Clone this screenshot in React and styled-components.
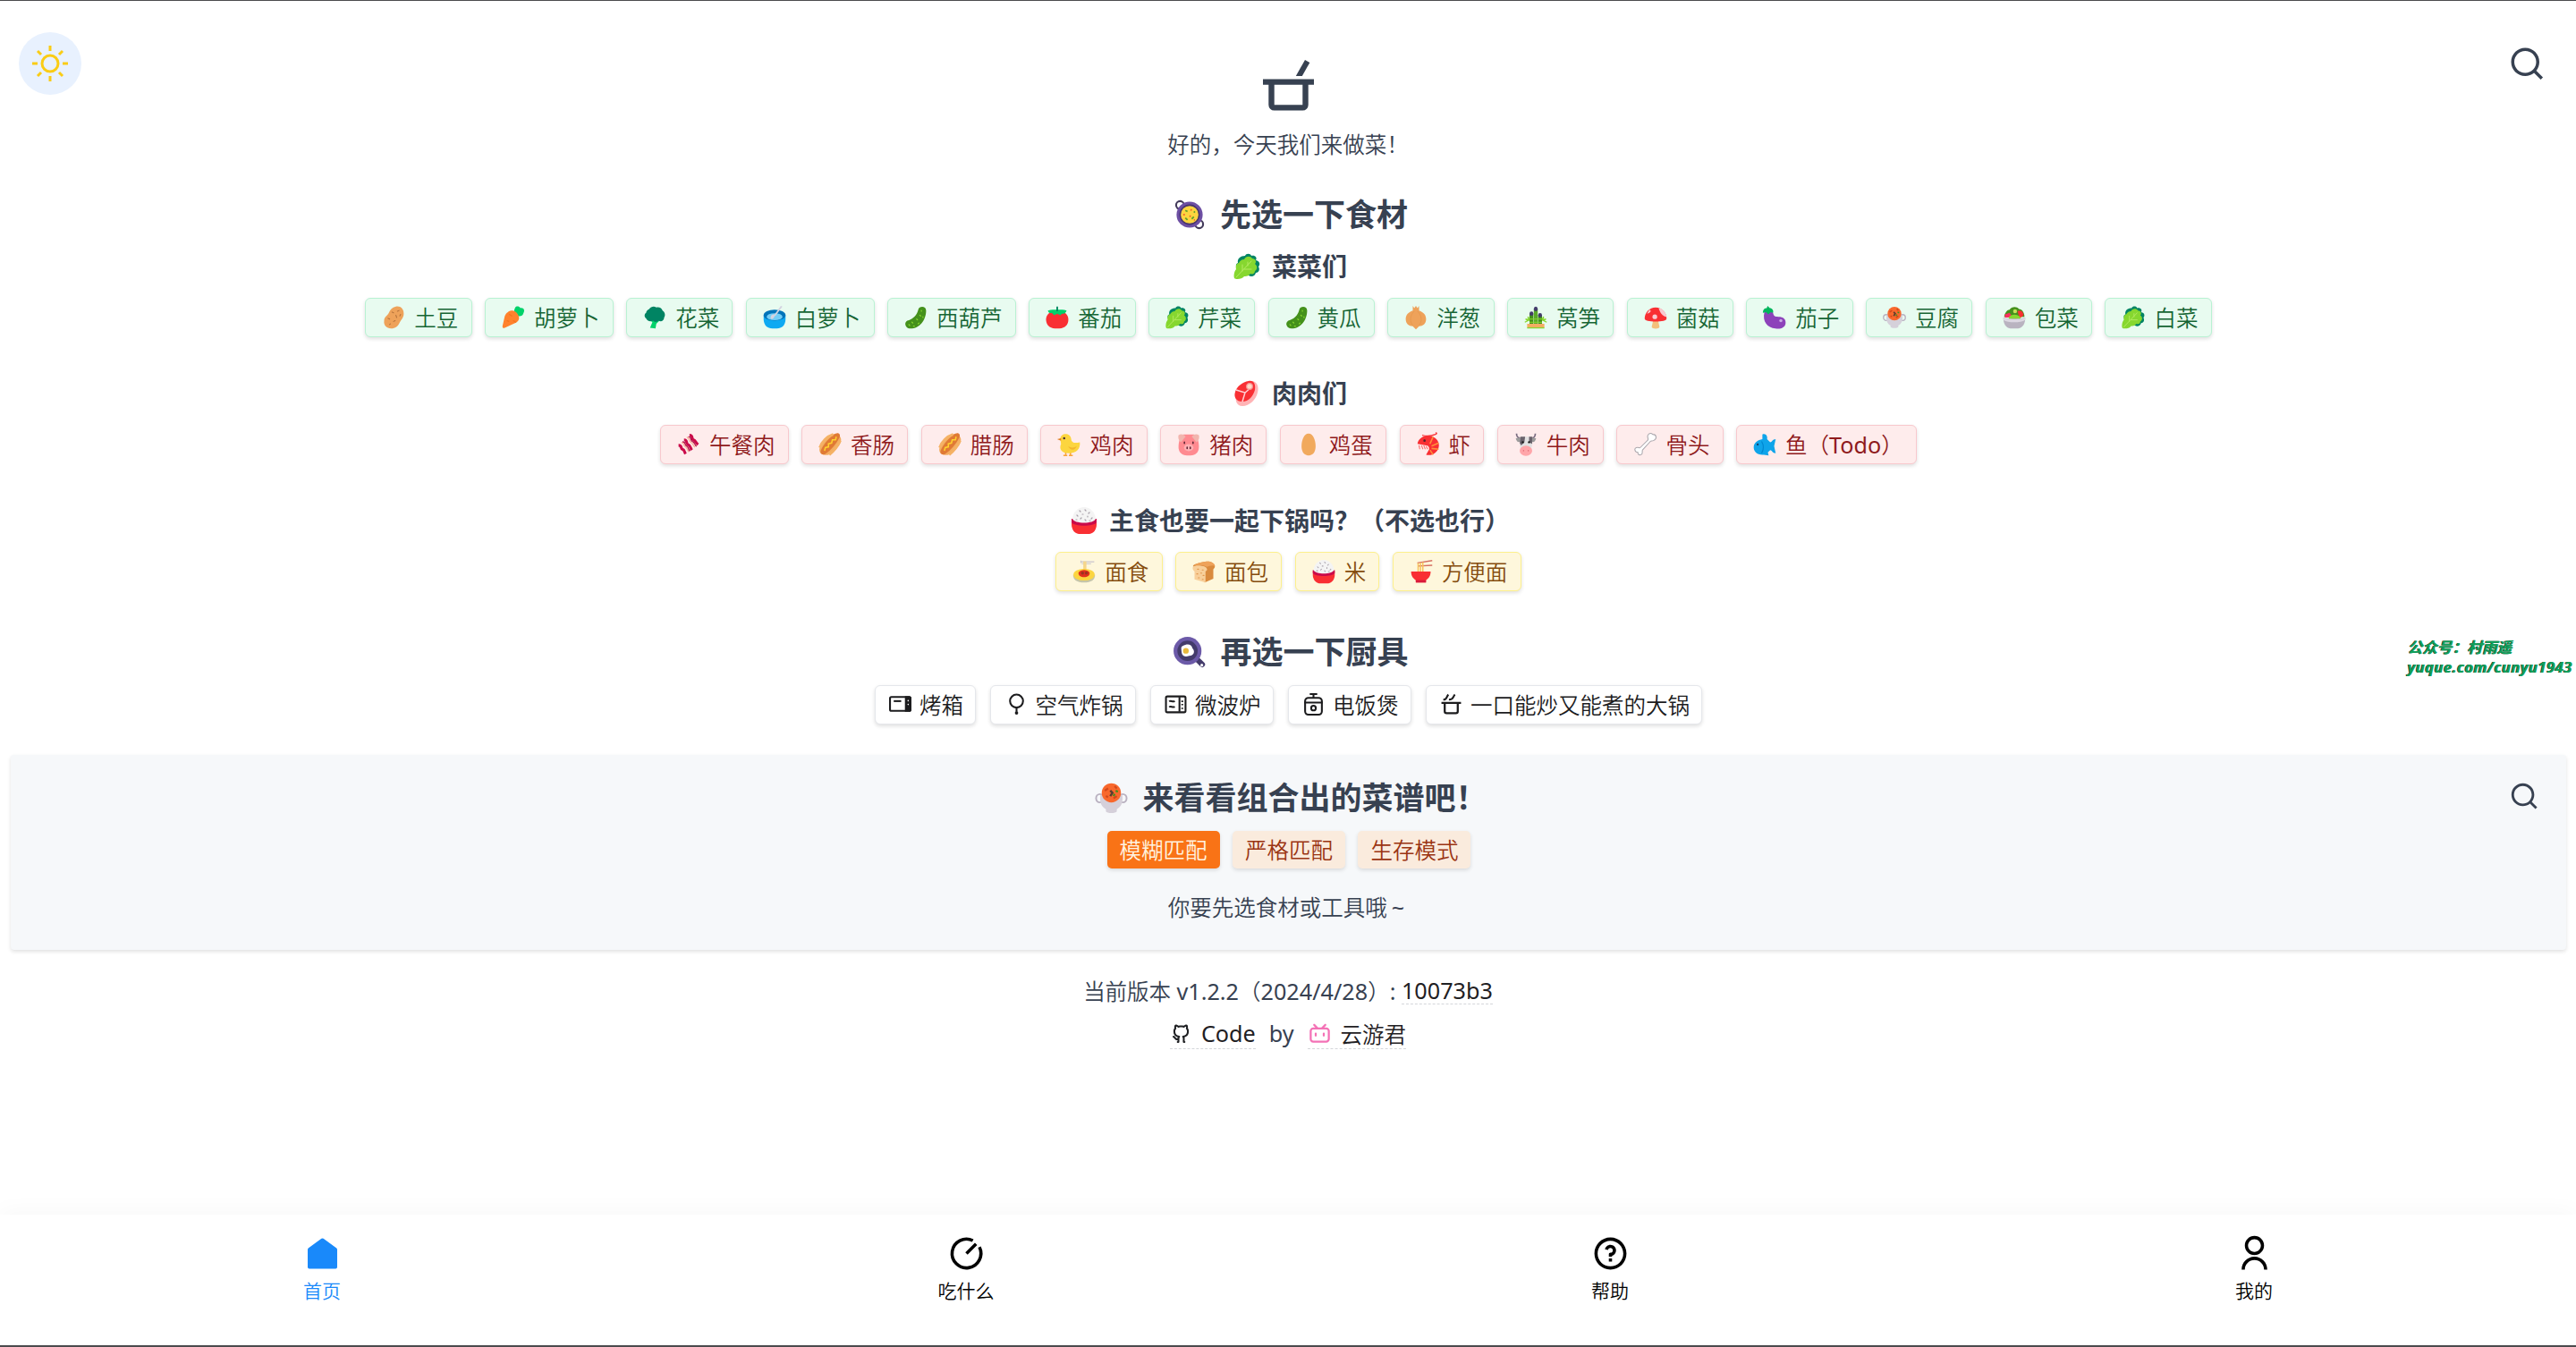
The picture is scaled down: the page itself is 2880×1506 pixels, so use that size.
import React from "react";
import styled, { createGlobalStyle } from "styled-components";
import {
  RiGithubLine,
  RiBilibiliLine,
  RiSearchLine,
  RiQuestionLine,
  RiUserLine,
} from "react-icons/ri";

const GlobalStyle = createGlobalStyle`
  * { box-sizing: border-box; }
  body {
    margin: 0;
    background: #fff;
    color: #374151;
    font-family: "Noto Sans", "Noto Sans CJK SC", sans-serif;
    font-size: 24.5px;
    font-weight: 350;
    text-spacing-trim: space-all;
  }
`;

const Page = styled.div`
  height: 1506px;
  display: flex;
  flex-direction: column;
  border-top: 1px solid #4b4b4d;
  border-bottom: 2px solid #4b4b4d;
  position: relative;
  overflow: hidden;
`;

const Latin = styled.span`
  font-size: 25.2px;
  font-weight: 400;
`;

const Header = styled.header`
  display: grid;
  grid-template-columns: 1fr auto 1fr;
  height: 141px;
  padding: 35px 34px 0 21px;
`;

const ThemeButton = styled.button`
  width: 70px;
  height: 70px;
  padding: 0;
  border: 0;
  border-radius: 50%;
  background: #e8f1fe;
  display: flex;
  align-items: center;
  justify-content: center;
`;

const Logo = styled.div`
  padding-top: 31px;
  margin-left: 13px;
  svg { display: block; width: 57px; height: 57px; }
`;

const IconButton = styled.button`
  justify-self: end;
  align-self: start;
  width: ${(p) => p.$size}px;
  height: ${(p) => p.$size}px;
  margin-top: ${(p) => p.$top || 0}px;
  padding: 0;
  border: 0;
  background: none;
  color: #374151;
  svg { display: block; width: 100%; height: 100%; }
`;

const Tagline = styled.p`
  margin: 0;
  height: 40px;
  line-height: 40px;
  text-align: center;
`;

const Heading = styled.h2`
  margin: ${(p) => p.$top}px 0 0 5px;
  height: 48px;
  line-height: 48px;
  font-size: 35px;
  font-weight: 700;
  display: flex;
  align-items: center;
  justify-content: center;
  gap: 15px;
`;

const SubHeading = styled.h3`
  margin: ${(p) => p.$top}px 0 0 4px;
  height: 36px;
  line-height: 36px;
  font-size: 28px;
  font-weight: 700;
  display: flex;
  align-items: center;
  justify-content: center;
  gap: 12px;
`;

const Row = styled.div`
  display: flex;
  justify-content: center;
  gap: ${(p) => p.$gap || 14.4}px;
  margin-top: ${(p) => p.$top}px;
  padding-left: 1px;
`;

const tones = {
  green: ["#e8fbf0", "#b9f2d3", "#166534"],
  red: ["#feecec", "#f8c8cd", "#8f1a1c"],
  yellow: ["#fef7dc", "#fdf08c", "#854d0e"],
  white: ["#fff", "#e5e7eb", "#1c1c1e"],
};

const Chip = styled.button`
  height: 44px;
  padding: 0 14.3px 1px 17px;
  display: flex;
  align-items: center;
  gap: 9px;
  border: 1px solid ${(p) => tones[p.$tone][1]};
  border-radius: 6px;
  background: ${(p) => tones[p.$tone][0]};
  color: ${(p) => tones[p.$tone][2]};
  box-shadow: 0 2px 4px rgba(0, 0, 0, 0.13);
  font: inherit;
  white-space: nowrap;
`;

const ToolChip = styled(Chip)`
  padding: 0 13.4px 1px 15.5px;
  gap: 9px;
`;

const Emoji = styled.svg`
  flex: none;
  width: ${(p) => p.$size}px;
  height: ${(p) => p.$size}px;
`;

const Panel = styled.section`
  position: relative;
  margin: 34px 11px 0 12px;
  height: 218px;
  border-radius: 4px;
  background: #f6f8fa;
  box-shadow: 0 2px 4px rgba(0, 0, 0, 0.12);
  padding-top: 24px;
`;

const PanelSearch = styled(IconButton)`
  position: absolute;
  top: 29px;
  right: 30px;
`;

const Mode = styled.button`
  height: 42px;
  padding: 0 14px 1px;
  border: 0;
  border-radius: 5px;
  font: inherit;
  color: ${(p) => (p.$active ? "#fff3e0" : "#9a3412")};
  background: ${(p) => (p.$active ? "#f97316" : "#faebdd")};
  box-shadow: 0 2px 4px rgba(0, 0, 0, 0.12);
`;

const Hint = styled(Tagline)`
  margin-top: 23px;
`;

const Tilde = styled(Latin)`
  display: inline-block;
  width: 24.5px;
`;

const Footer = styled.footer`
  margin-top: 21px;
  display: flex;
  flex-direction: column;
  align-items: center;
`;

const FooterLine = styled.div`
  height: 48px;
  display: flex;
  align-items: center;
  gap: ${(p) => p.$gap || 0}px;
  white-space: pre;
`;

const FooterLink = styled.a`
  height: ${(p) => p.$height || 34}px;
  margin-top: 1px;
  display: flex;
  align-items: center;
  gap: 10px;
  color: #1f2023;
  border-bottom: 1px dashed #d4d6da;
`;

const Nav = styled.nav`
  margin-top: auto;
  height: 146px;
  display: grid;
  grid-template-columns: repeat(4, 1fr);
  background: #fff;
  box-shadow: 0 -4px 24px rgba(0, 0, 0, 0.03);
`;

const NavItem = styled.a`
  display: flex;
  flex-direction: column;
  align-items: center;
  padding-top: 22px;
  font-size: 21px;
  line-height: 30px;
  gap: 12px;
  color: ${(p) => (p.$active ? "#1989fa" : "#000")};
  svg { width: 43px; height: 43px; display: block; }
  svg + span { margin-top: -7px; }
`;

const Watermark = styled.div`
  position: absolute;
  left: 2692px;
  top: 712px;
  font-size: 16.7px;
  line-height: 22px;
  font-weight: 700;
  font-style: italic;
  color: #10a05a;
  text-shadow: -1px 0 0 #0b3b22;
  white-space: nowrap;
`;

const WatermarkUrl = styled.div`
  letter-spacing: 0.4px;
`;

const art = {
  potato: (
    <>
      <path d="M19 2c6-1 10 3 10 9 0 5-3 7-5 11-2 5-6 8-11 8C7 30 3 26 4 20c0-5 4-6 6-10 2-4 4-7 9-8Z" fill="#eea25a" />
      <path d="M14 9l2 1M21 8l2-1M19 13l1 3M9 17l2 1M16 21l2-1M11 25l1-1M24 14l1-2" stroke="#b3703a" strokeWidth="1.2" strokeLinecap="round" />
    </>
  ),
  carrot: (
    <>
      <path d="M18 4c1-3 5-3 7 0 4-1 6 3 4 6-1 4-4 5-8 4-4-2-5-6-3-10Z" fill="#00d26a" />
      <path d="M9 9c5-4 12-1 14 6 1 4-2 7-5 8L5 29c-2 1-3 0-3-2L5 14c1-2 2-4 4-5Z" fill="#ff822d" />
      <path d="M11 12l3 2M19 22l-3-2M8 20l2 1" stroke="#f2731f" strokeWidth="1.3" strokeLinecap="round" />
    </>
  ),
  broccoli: (
    <>
      <path d="M11 17l7 2 7-2-7 7-1 6-7-1 3-7-5-4Z" fill="#00d26a" />
      <path d="M9 5c2-3 6-4 9-2 4-1 7 1 8 4 3 2 4 6 2 9 0 4-4 6-7 4-3 3-6 1-7 0-4 2-8 0-9-3-3-2-2-6 0-7 0-2 2-4 4-5Z" fill="#008463" />
    </>
  ),
  bowl: (
    <>
      <path d="M2 13h28v5c0 8-5 12-11 12h-6C7 30 2 26 2 18Z" fill="#0fa9f2" />
      <ellipse cx="16" cy="13" rx="14" ry="7" fill="#0074ba" />
      <ellipse cx="16" cy="15" rx="10" ry="4.500" fill="#73cdf6" />
      <path d="M16 14c-1 5-6 5-5 1 1-3 3-3 5-3L24 1l2 1-9 12Z" fill="#d3d3e0" />
    </>
  ),
  cucumber: (
    <>
      <path d="M19 6c1-5 10-5 10 1 0 12-8 23-20 23C3 30 0 23 5 20c7-2 12-6 14-14Z" fill="#44911b" />
      <path d="M23 7v1M21 13l1 1M25 15v1M17 18l1 1M19 24l1-1M11 22l1 1M7 25l1 1M13 27h1" stroke="#86d72f" strokeWidth="1.4" strokeLinecap="round" />
    </>
  ),
  tomato: (
    <>
      <path d="M8 9c6-2 10-2 16 0 5 2 7 7 6 12-1 6-6 9-14 9S3 27 2 21C1 16 3 11 8 9Z" fill="#f92f33" />
      <path d="M4 7c5-1 8-1 11-1V3h2v3c4 0 7 0 11 1-1 3-4 5-6 4l-2 2-4-2-4 2-3-3C7 11 5 10 4 7Z" fill="#00d26a" />
      <path d="M15 2h2v6h-2z" fill="#008463" />
    </>
  ),
  lettuce: (
    <>
      <path d="M14 4c1-3 6-3 7 0 4-1 7 2 5 5 5 1 5 5 3 7 2 4 0 7-3 7-1 4-5 5-8 3L7 20c-4-3-4-7-1-8-1-5 3-8 8-8Z" fill="#008463" />
      <path d="M13 8c2-4 7-4 9-1 4 0 5 4 3 6 4 3 2 7 0 8 0 3-3 4-5 3-2 3-6 3-7 3-2 3-9 4-11 2-1-3 0-8 2-10-1-4 1-7 3-7 1-2 3-4 6-4Z" fill="#86d72f" />
      <path d="M4 28 21 10M11 21v-7M13 19h8M17 15v-4" stroke="#b5ea62" strokeWidth="1" fill="none" strokeLinecap="round" />
    </>
  ),
  onion: (
    <>
      <path d="M12 1l2 3 2-3 2 3 2-3v6c6 2 9 6 9 11 0 6-4 9-9 9l-4 4-4-4c-5 0-9-3-9-9 0-5 3-9 9-11Z" fill="#eea25a" />
      <path d="M14 8c-6 5-6 14-2 18M18 8c6 5 6 14 2 18" stroke="#e5984d" strokeWidth="1" fill="none" />
    </>
  ),
  bamboo: (
    <>
      <path d="M2 22l4-2-3-2 4 1-1-4 3 6M30 22l-4-2 3-2-4 1 1-4-3 6" stroke="#86d72f" strokeWidth="1.500" fill="none" />
      <rect x="8" y="11" width="5" height="13" fill="#44911b" />
      <rect x="13.500" y="5" width="5" height="19" fill="#5aa82a" />
      <rect x="19" y="13" width="5" height="11" fill="#44911b" />
      <ellipse cx="10.500" cy="11" rx="2.500" ry="2.800" fill="#433b6b" />
      <ellipse cx="16" cy="5" rx="2.500" ry="3" fill="#433b6b" />
      <ellipse cx="21.500" cy="13" rx="2.500" ry="2.800" fill="#433b6b" />
      <path d="M8 18h16M8 22h16" stroke="#86d72f" strokeWidth="1.300" />
      <path d="M5 24h22v5H5z" fill="#f3ad61" />
      <path d="M5 28.500h22V30H5z" fill="#86d72f" />
    </>
  ),
  mushroom: (
    <>
      <path d="M13 19h6l2 9c0 3-10 3-10 0Z" fill="#f3c07b" />
      <path d="M16 3C8 3 2 10 2 17c0 3 6 4 14 4s14-1 14-4C30 10 24 3 16 3Z" fill="#f92f33" />
      <path d="M20 4c6 1 9 6 10 11-5 0-9-6-10-11Z" fill="#f9c9d0" />
      <circle cx="15" cy="15" r="3" fill="#f9c9d0" />
      <path d="M8 6c3 1 2 4-3 5Z" fill="#f9c9d0" />
    </>
  ),
  eggplant: (
    <>
      <path d="M3 9c3-3 9-3 11 1 1 4 2 5 7 5 6 0 10 3 9 9-1 5-6 7-13 6C7 29 0 21 3 9Z" fill="#8d42ba" />
      <path d="M7 1l3 3c3 0 5 3 4 6l-3-1-3 3-3-3-4 1c0-4 2-6 5-6Z" fill="#00b55c" />
      <circle cx="24" cy="20" r="2" fill="#c9a6e6" />
    </>
  ),
  stew: (
    <>
      <ellipse cx="5.500" cy="16" rx="3.500" ry="3.800" fill="none" stroke="#b9b1c0" strokeWidth="1.600" />
      <ellipse cx="26.500" cy="16" rx="3.500" ry="3.800" fill="none" stroke="#b9b1c0" strokeWidth="1.600" />
      <path d="M6 13h20c1 7-1 11-5 13v2c-1 2-9 2-10 0v-2c-4-2-6-6-5-13Z" fill="#d5d0da" />
      <circle cx="16" cy="11" r="8.800" fill="#f8682c" />
      <path d="M10 9l3-2M19 5l2 2M18 16l3-2M11 14l2 1" stroke="#d3481a" strokeWidth="1.800" />
      <path d="M15 9l2 2-2 3" stroke="#5a3e30" strokeWidth="2" fill="none" />
      <path d="M20 9l2 1M19 12l-1 2" stroke="#44911b" strokeWidth="1.800" />
    </>
  ),
  salad: (
    <>
      <path d="M3 15c1-5 4-9 7-9 2-4 9-5 12-1 4 0 7 5 7 10Z" fill="#44911b" />
      <path d="M4 12l6-2 4 6H4Z" fill="#f92f60" />
      <path d="M20 8c4-2 7 0 8 5l-5 4Z" fill="#f92f33" />
      <path d="M9 16c3-5 11-5 15 0v3H9Z" fill="#86d72f" />
      <circle cx="17" cy="8" r="2.500" fill="#c5e05a" />
      <path d="M2 16c4 2 24 2 28 0 0 8-3 13-9 14H11C5 29 2 24 2 16Z" fill="#b9b3c0" />
      <path d="M2 16c4 3 24 3 28 0v3c-6 4-22 4-28 0Z" fill="#dcd7e1" />
    </>
  ),
  bacon: (
    <>
      <path d="M3 17c5 0 2 4 5 5s2 3 4 6M10 10c5 0 2 5 5 6s3 4 5 7M17 4c5 0 2 5 5 6s3 4 6 6" stroke="#ca0b4a" strokeWidth="3.600" fill="none" />
      <path d="M6.500 13.500c5 0 2 4 5 5s2 4 5 7M13.500 7c5 0 2 5 5 6s3 4 5.500 6.500" stroke="#f7b6a0" strokeWidth="1.800" fill="none" />
      <path d="M8 12.500c5 0 2 4 5 5s2 4 4.500 7M15.500 6c5 0 2 5 5 6s3 4 5.500 6.500" stroke="#b00a44" strokeWidth="1.400" fill="none" />
    </>
  ),
  hotdog: (
    <>
      <path d="M15 5C21 1 26 2 28 5c4 4 2 10-3 15C20 27 14 31 8 29 2 28 1 22 4 17c3-4 6-9 11-12Z" fill="#f3ad61" />
      <path d="M23 2c4-2 7 1 5 5C24 15 17 23 10 28c-3 2-7 0-6-4C8 15 15 7 23 2Z" fill="#e07a35" />
      <path d="M20 3C13 5 5 13 3 20M29 11c-3 7-8 13-14 18" stroke="#f5b265" strokeWidth="3.500" fill="none" />
      <path d="M24 6l-1 4-4 0-1 4-4 1 0 4-4 1-1 4" stroke="#ffcf2e" strokeWidth="1.800" fill="none" />
    </>
  ),
  chick: (
    <>
      <path d="M12 24v5M18 24v5M9 30h5M16 30h5" stroke="#f9a43a" strokeWidth="1.800" />
      <path d="M5 9c0-8 13-9 14 0 0 4 4 6 11 4 1 8-4 14-14 14C7 27 3 22 6 15Z" fill="#fcd53f" />
      <path d="M6 8l-5 1 5 2Z" fill="#e07b1a" />
      <circle cx="10" cy="8" r="1.400" fill="#402a32" />
      <path d="M15 18c4 3 8 2 11 0-1 5-8 7-11 0Z" fill="#f3b62d" />
    </>
  ),
  pig: (
    <>
      <path d="M9 3h14c4 3 6 9 6 16 0 7-4 11-13 11S3 26 3 19C3 12 5 6 9 3Z" fill="#ff8a90" />
      <path d="M3 4c3-2 7-1 9 2-2 2-4 5-6 7-3-2-4-6-3-9ZM29 4c-3-2-7-1-9 2 2 2 4 5 6 7 3-2 4-6 3-9Z" fill="#f2b5ae" />
      <ellipse cx="16" cy="20" rx="6" ry="4.500" fill="#ffb1b4" />
      <path d="M14 19.500v1.500M18 19.500v1.500M10.500 13v1.500M21.500 13v1.500" stroke="#5c2434" strokeWidth="1.800" strokeLinecap="round" />
    </>
  ),
  egg: <path d="M16 2c6 0 9 9 9 16 0 8-4 12-9 12s-9-4-9-12C7 11 10 2 16 2Z" fill="#f1a95d" />,
  shrimp: (
    <>
      <path d="M8 4c6 2 12 1 17-1 2-1 2-2 0-2" stroke="#f92f33" strokeWidth="1.500" fill="none" />
      <path d="M2 15C3 8 10 4 18 5c8 1 13 8 11 15-2 7-9 11-16 9l4-7c0-3-1-5-4-5Z" fill="#f92f33" />
      <path d="M29 14l-9 4M29 22l-9-1M22 29l-4-6M22 6l-4 9" stroke="#ff8f3a" strokeWidth="1.800" />
      <path d="M4 17l1 5M7 17l2 5M10 17l2 5M13 18l2 4" stroke="#fb6f70" strokeWidth="1.300" />
      <circle cx="11" cy="11" r="1.500" fill="#50202b" />
    </>
  ),
  cow: (
    <>
      <path d="M4 2c0 5 2 6 6 6M28 2c0 5-2 6-6 6" stroke="#7a6c80" strokeWidth="2" fill="none" />
      <path d="M3 8l6-1v5c-3 2-5 0-6-4ZM29 8l-6-1v5c3 2 5 0 6-4Z" fill="#9b9b9b" />
      <path d="M9 6h14l1 10-2 9H10L8 16Z" fill="#e2e2e2" />
      <path d="M9 6h6l-1 7-4 4-2-3ZM20 6h4v9l-4-2Z" fill="#6a636c" />
      <ellipse cx="16" cy="24" rx="8" ry="6.500" fill="#ffa5a9" />
      <circle cx="12" cy="13" r="1.400" fill="#1c1c1c" />
      <circle cx="20" cy="13" r="1.400" fill="#1c1c1c" />
      <path d="M13 23v1.500M19 23v1.500" stroke="#d9646c" strokeWidth="1.300" />
    </>
  ),
  bone: (
    <path d="M20 8c-2-5 3-8 6-5 5 0 6 6 1 8-2 1-3 0-4 1L13 23c-1 1 1 5-2 6-3 1-4-1-4-3-4 0-5-5-2-6 3-1 4 1 5 0L20 10Z" fill="#fff" stroke="#aaa6ac" strokeWidth="1.200" />
  ),
  fish: (
    <>
      <path d="M13 3c4-2 7 2 6 6l4 4c2 0 3-4 7-4l-2 9 2 9c-4 0-5-4-7-4l-3 3 1 4-6-1C7 30 1 25 2 18c1-5 5-8 11-9Z" fill="#0fa4ea" />
      <path d="M12 12c3 5 3 10 0 15" stroke="#0086d0" strokeWidth="1.300" fill="none" />
      <circle cx="7" cy="16" r="1.300" fill="#123c66" />
    </>
  ),
  meat: (
    <>
      <path d="M20 2c7-1 10 6 8 13-2 8-9 15-17 15C4 30 2 23 5 15 8 8 13 3 20 2Z" fill="#ffb3b5" />
      <path d="M18 2c6-1 8 4 7 10-2 7-7 13-14 13C4 25 1 20 3 14 5 8 11 3 18 2Z" fill="#f92f33" />
      <path d="M4 12l10 3-3 10M14 15l7-6" stroke="#ffd0d2" strokeWidth="1.500" fill="none" />
      <circle cx="19" cy="8" r="3.400" fill="#ffd8c4" stroke="#f58f91" strokeWidth="1.200" />
    </>
  ),
  rice: (
    <>
      <path d="M2 15h28v5c0 6-3 10-8 11H10c-5-1-8-5-8-11Z" fill="#f92f33" />
      <path d="M2 14h28v4c-3 5-25 5-28 0Z" fill="#ca0b4a" />
      <path d="M3 14C3.500 7 9 1 16 1s12.500 6 13 13c-2 6-24 6-26 0Z" fill="#f4f4f4" />
      <path d="M11 5l1 1M17 4l1 1M22 7l-1 1M8 10l1 1M14 9h1M20 11v1M25 13l-1 1M12 14l1-1M17 15l1 1M7 15h1M22 16h1" stroke="#a7a0aa" strokeWidth="1.200" strokeLinecap="round" />
    </>
  ),
  pasta: (
    <>
      <path d="M12 5V2M12 3.500h17M13 6h12" stroke="#c9c5cd" strokeWidth="1.300" />
      <path d="M15 3h4v13h-4z" fill="#f5d68a" />
      <path d="M2 20c0 7 5 10 14 10s14-3 14-10Z" fill="#c6c5a9" />
      <ellipse cx="16" cy="20" rx="13.500" ry="7.500" fill="#fcd53f" />
      <path d="M9 17c3-4 11-4 14 0 1 4-3 6-7 6s-8-2-7-6Z" fill="#e0301e" />
      <circle cx="14" cy="18" r="2" fill="#9c3320" />
      <circle cx="19" cy="18" r="2" fill="#9c3320" />
    </>
  ),
  bread: (
    <>
      <path d="M2 9c0-3 14-6 19-6 5 0 9 3 9 6 0 2-1 3-2 4v12l-11 5Z" fill="#d98a3d" />
      <path d="M2 10c2-3 15-2 17 1 2 3 1 3-1 5v14L4 26V16c-2-2-3-4-2-6Z" fill="#f8cf9a" />
      <path d="M8 13h1M14 14h1M7 19h1M12 18h1M15 21h1M9 24h1M14 26h1" stroke="#e0964c" strokeWidth="1.400" strokeLinecap="round" />
      <path d="M3 8C8 4 18 3 22 3c5 1 8 3 8 6-2-2-8 0-10 1C17 8 8 7 3 8Z" fill="#eea25a" />
    </>
  ),
  noodles: (
    <>
      <path d="M11 5l19-3M12 9l18-1" stroke="#d56e61" strokeWidth="1.600" />
      <path d="M12 5v12M15 4.500v12M18 4v12" stroke="#f8c25a" strokeWidth="1.700" />
      <path d="M3 16h25c0 6-3 9-6 11v3H9v-3c-3-2-6-5-6-11Z" fill="#f92f33" />
      <path d="M9 27h13v3H9z" fill="#d81a3c" />
    </>
  ),
  paella: (
    <>
      <circle cx="7" cy="7" r="3.700" fill="none" stroke="#433b5b" strokeWidth="1.800" />
      <circle cx="25" cy="25" r="3.700" fill="none" stroke="#433b5b" strokeWidth="1.800" />
      <circle cx="16" cy="16" r="12.300" fill="#6d4fa3" />
      <circle cx="16" cy="16" r="9.600" fill="#46356b" />
      <circle cx="16" cy="16" r="8.300" fill="#fcd53f" />
      <path d="M12 12l2 1M20 13l1 1M12 19l2 2M20 18l-2 2" stroke="#5fa02c" strokeWidth="1.500" />
      <path d="M10 16h1.500M17 11l1 1M16 17l1 1M20 21h1" stroke="#f3662d" strokeWidth="1.500" />
    </>
  ),
  pan: (
    <>
      <path d="M23 22l5 5" stroke="#433b6b" strokeWidth="5" strokeLinecap="round" />
      <circle cx="27.600" cy="27.600" r="1.300" fill="#fff" />
      <circle cx="14.500" cy="14.500" r="12.800" fill="#6c5aa8" />
      <circle cx="14.500" cy="14.500" r="9.300" fill="#433b6b" />
      <path d="M10 10c4-2 8-2 9 2 3 3 1 7-3 7-5 2-7-1-7-4 0-2-1-4 1-5Z" fill="#fff" />
      <circle cx="13" cy="14.500" r="2.600" fill="#e9b93c" />
    </>
  ),
};

function Art({ name, size = 28 }) {
  return (
    <Emoji viewBox="0 0 32 32" $size={size} fill="none">
      {art[name]}
    </Emoji>
  );
}

const toolArt = {
  oven: (
    <>
      <rect x="1" y="4" width="22" height="15" rx="1.500" />
      <path d="M5 8.500h8" />
      <path d="M18 4h3.500A1.500 1.500 0 0 1 23 5.500v12a1.500 1.500 0 0 1-1.500 1.500H18Z" fill="currentColor" />
      <path d="M20.500 8v.1M20.500 12v.1" stroke="#fff" strokeWidth="1.500" strokeLinecap="round" />
    </>
  ),
  airFryer: (
    <>
      <circle cx="12" cy="8.500" r="7" />
      <path d="M12 16v4" />
      <circle cx="12" cy="21.200" r="1.800" fill="currentColor" stroke="none" />
    </>
  ),
  microwave: (
    <>
      <rect x="1.500" y="3.500" width="21" height="17" rx="1.500" />
      <path d="M16 4v16M5 9c2-2 3 1 6-.5M5 15c2-2 3 1 6-.5M19 8v1.500M19 11.500v1.500M19 15.500v1.500" />
    </>
  ),
  cooker: (
    <>
      <path d="M8 1h8M12 1v4M2 10h20" />
      <rect x="3" y="5" width="18" height="18" rx="3.500" />
      <circle cx="12" cy="16" r="2.500" />
    </>
  ),
  wok: (
    <>
      <path d="M1.500 10.500h21M5 10v9.500a2 2 0 0 0 2 2h10a2 2 0 0 0 2-2V10" strokeWidth="2.200" />
      <path d="M3.500 7c4.500 0 3-3.500 5.500-5.500M9.500 7c5.500 0 4-3.500 6.500-5.500" />
    </>
  ),
};

function ToolArt({ name }) {
  return (
    <Emoji viewBox="0 0 24 24" $size={25} fill="none" stroke="currentColor" strokeWidth="2">
      {toolArt[name]}
    </Emoji>
  );
}

const vegetables = [
  ["potato", "土豆"], ["carrot", "胡萝卜"], ["broccoli", "花菜"], ["bowl", "白萝卜"],
  ["cucumber", "西葫芦"], ["tomato", "番茄"], ["lettuce", "芹菜"], ["cucumber", "黄瓜"],
  ["onion", "洋葱"], ["bamboo", "莴笋"], ["mushroom", "菌菇"], ["eggplant", "茄子"],
  ["stew", "豆腐"], ["salad", "包菜"], ["lettuce", "白菜"],
];
const meats = [
  ["bacon", "午餐肉"], ["hotdog", "香肠"], ["hotdog", "腊肠"], ["chick", "鸡肉"],
  ["pig", "猪肉"], ["egg", "鸡蛋"], ["shrimp", "虾"], ["cow", "牛肉"],
  ["bone", "骨头"], ["fish", <span key="fish">鱼（<Latin>Todo</Latin>）</span>],
];
const staples = [["pasta", "面食"], ["bread", "面包"], ["rice", "米"], ["noodles", "方便面"]];
const tools = [
  ["oven", "烤箱"], ["airFryer", "空气炸锅"], ["microwave", "微波炉"],
  ["cooker", "电饭煲"], ["wok", "一口能炒又能煮的大锅"],
];

function Chips({ items, tone, top }) {
  return (
    <Row $top={top}>
      {items.map(([icon, label], i) => (
        <Chip key={i} $tone={tone}>
          <Art name={icon} />
          {label}
        </Chip>
      ))}
    </Row>
  );
}

export default function App() {
  return (
    <Page lang="zh-CN">
      <GlobalStyle />
      <Header>
        <ThemeButton>
          <svg width="42" height="42" viewBox="0 0 42 42" fill="none" stroke="#facc15" strokeWidth="3">
            <circle cx="21" cy="21" r="9" />
            <path d="M21 1v6M21 35v6M1 21h6M35 21h6M7 7l4 4M31 31l4 4M7 35l4-4M31 11l4-4" />
          </svg>
        </ThemeButton>
        <Logo>
          <svg viewBox="0 0 57 57" fill="#374151">
            <path d="M47 0l5.300 3-8.500 15h-7Z" />
            <path fillRule="evenodd" d="M0 21.500h57v6.300h-6.300v22.500a6.300 6.300 0 0 1-6.300 6.300H12.600a6.300 6.300 0 0 1-6.300-6.300V27.800H0Zm12.700 6.300v22.400h31.600V27.800Z" />
          </svg>
        </Logo>
        <IconButton $size={42} $top={14}><RiSearchLine /></IconButton>
      </Header>
      <Tagline>好的，今天我们来做菜！</Tagline>

      <Heading $top={34}><Art name="paella" size={38} />先选一下食材</Heading>
      <SubHeading $top={16}><Art name="lettuce" size={32} />菜菜们</SubHeading>
      <Chips items={vegetables} tone="green" top={17} />
      <SubHeading $top={45}><Art name="meat" size={32} />肉肉们</SubHeading>
      <Chips items={meats} tone="red" top={17} />
      <SubHeading $top={45}><Art name="rice" size={32} />主食也要一起下锅吗？（不选也行）</SubHeading>
      <Chips items={staples} tone="yellow" top={17} />

      <Heading $top={44}><Art name="pan" size={39} />再选一下厨具</Heading>
      <Row $top={13} $gap={15.6}>
        {tools.map(([icon, label]) => (
          <ToolChip key={label} $tone="white">
            <ToolArt name={icon} />
            {label}
          </ToolChip>
        ))}
      </Row>

      <Panel>
        <PanelSearch $size={34}><RiSearchLine /></PanelSearch>
        <Heading $top={0}><Art name="stew" size={39} />来看看组合出的菜谱吧！</Heading>
        <Row $top={13}>
          <Mode $active>模糊匹配</Mode>
          <Mode>严格匹配</Mode>
          <Mode>生存模式</Mode>
        </Row>
        <Hint>你要先选食材或工具哦<Tilde>~</Tilde></Hint>
      </Panel>

      <Footer>
        <FooterLine>
          <span>当前版本 <Latin>v1.2.2</Latin>（<Latin>2024/4/28</Latin>）<Latin>: </Latin></span>
          <FooterLink $height={30}><Latin>10073b3</Latin></FooterLink>
        </FooterLine>
        <FooterLine $gap={15}>
          <FooterLink><RiGithubLine size={25} /><Latin>Code</Latin></FooterLink>
          <Latin>by</Latin>
          <FooterLink><RiBilibiliLine size={27} color="#f472b6" />云游君</FooterLink>
        </FooterLine>
      </Footer>

      <Nav>
        <NavItem $active>
          <svg viewBox="0 0 24 24" fill="currentColor">
            <path d="M21.200 20.500a1 1 0 0 1-1 1H3.800a1 1 0 0 1-1-1V9.500c0-.31.14-.6.386-.79l8.200-6.022a1 1 0 0 1 1.228 0l8.200 6.022c.243.19.386.48.386.79Z" />
          </svg>
          <span>首页</span>
        </NavItem>
        <NavItem>
          <svg viewBox="0 0 24 24" fill="none" stroke="currentColor" strokeWidth="2">
            <path d="M16 3.900A9 9 0 1 0 20.100 8M12 12l6-6" />
          </svg>
          <span>吃什么</span>
        </NavItem>
        <NavItem><RiQuestionLine /><span>帮助</span></NavItem>
        <NavItem><RiUserLine /><span>我的</span></NavItem>
      </Nav>

      <Watermark>
        公众号：村雨遥
        <WatermarkUrl>yuque.com/cunyu1943</WatermarkUrl>
      </Watermark>
    </Page>
  );
}
